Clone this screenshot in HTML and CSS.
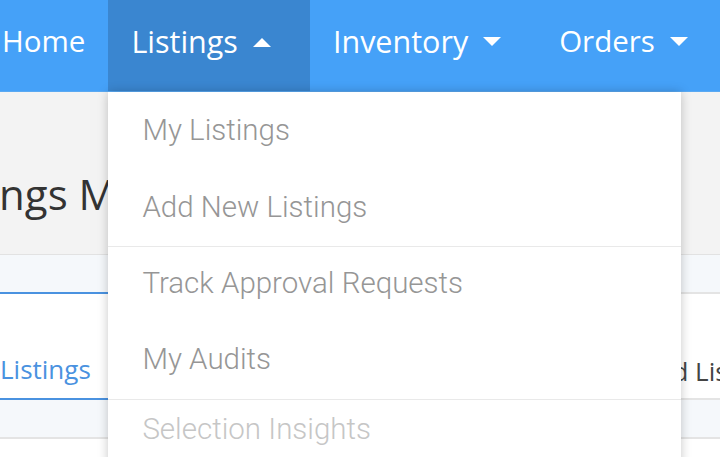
FILE: index.html
```html
<!DOCTYPE html>
<html lang="en">
<head>
<meta charset="utf-8">
<title>Listings</title>
<link rel="stylesheet" href="styles.css">
</head>
<body>
<header class="nav">
  <div class="nav-item nav-home">Home</div>
  <div class="nav-item nav-active">
    <span>Listings</span>
    <svg class="caret" width="18" height="10" viewBox="0 0 18 10"><path d="M0 10 L9 1 L18 10 Z" fill="#fff"/></svg>
    <div class="dropdown">
      <div class="dd-group">
        <div class="dd-item">My Listings</div>
        <div class="dd-item">Add New Listings</div>
      </div>
      <div class="dd-group dd-group-2">
        <div class="dd-item">Track Approval Requests</div>
        <div class="dd-item">My Audits</div>
      </div>
      <div class="dd-group">
        <div class="dd-head">Selection Insights</div>
      </div>
    </div>
  </div>
  <div class="nav-item">
    <span>Inventory</span>
    <svg class="caret" width="18" height="10" viewBox="0 0 18 10"><path d="M0 0 L9 9 L18 0 Z" fill="#fff"/></svg>
  </div>
  <div class="nav-item nav-orders">
    <span>Orders</span>
    <svg class="caret" width="18" height="10" viewBox="0 0 18 10"><path d="M0 0 L9 9 L18 0 Z" fill="#fff"/></svg>
  </div>
</header>
<main class="page">
  <h1 class="title">Listings Management</h1>
  <section class="card">
    <div class="card-head"></div>
    <div class="tabs">
      <div class="tab tab-active">Listings</div>
      <div class="tab tab-wide">Ready for Activation</div>
      <div class="tab">Archived Listings</div>
    </div>
    <div class="card-sub"></div>
    <div class="card-body"></div>
  </section>
</main>
</body>
</html>
```
FILE: styles.css
```css
* { box-sizing: border-box; }
html, body { margin: 0; padding: 0; }
body {
  width: 720px;
  height: 457px;
  overflow: hidden;
  background: #f3f3f3;
  font-family: "Open Sans", "Noto Sans", sans-serif;
}
.nav {
  display: flex;
  height: 92px;
  background: #45a1f8;
  border-bottom: 1px solid #5aa9f2;
}
.nav-item {
  position: relative;
  flex-shrink: 0;
  display: flex;
  align-items: center;
  gap: 15px;
  padding: 0 37px 9px 23px;
  color: #fff;
  font-size: 30.5px;
  line-height: 1;
  white-space: nowrap;
}
.nav-home { padding: 0 23px 9px 2px; font-size: 29.5px; }
.nav-active { background: #3a86d0; padding-right: 39px; }
.nav-orders { font-size: 29.5px; padding-left: 21px; }
.caret { display: block; margin-top: 2px; }
.dropdown {
  position: absolute;
  top: 92px;
  left: 0;
  width: 573px;
  background: #fff;
  box-shadow: 0 0 10px rgba(0,0,0,0.22);
  z-index: 10;
  font-family: "Roboto", "Open Sans", sans-serif;
  font-weight: 300;
  font-size: 29.5px;
}
.dd-group + .dd-group { border-top: 1px solid #e9e9e9; }
.dd-item {
  height: 77px;
  display: flex;
  align-items: center;
  padding-left: 34px;
  color: #969696;
}
.dd-group-2 .dd-item { height: 76px; padding-bottom: 3px; }
.dd-head {
  padding: 12px 0 30px 34px;
  line-height: 34px;
  color: #c6c6c6;
}
.title {
  margin: 73px 0 32px -79px;
  font-size: 42px;
  font-weight: 400;
  line-height: 57px;
  color: #333;
  white-space: nowrap;
}
.card { background: #fff; }
.card-head {
  height: 38px;
  border-top: 1px solid #e2e2e2;
  background: #f5f8fb;
}
.tabs {
  display: flex;
  align-items: flex-end;
  height: 108px;
  border-top: 2px solid #e4e4e4;
  border-bottom: 2px solid #e4e4e4;
  background: #fff;
}
.tab {
  flex-shrink: 0;
  padding: 0 24px 9px;
  font-size: 26px;
  line-height: 35px;
  color: #444;
  white-space: nowrap;
  align-self: stretch;
  display: flex;
  align-items: flex-end;
}
.tab-active {
  padding-left: 0;
  color: #4a92e0;
  margin: -2px 0;
  border-top: 2px solid #4a92e0;
  border-bottom: 2px solid #4a92e0;
  padding-bottom: 11px;
}
.tab-wide { width: 444px; }
.card-sub {
  height: 39px;
  background: #f5f8fb;
  border-bottom: 2px solid #e4e4e4;
}
.card-body { height: 40px; background: #fff; }
```
